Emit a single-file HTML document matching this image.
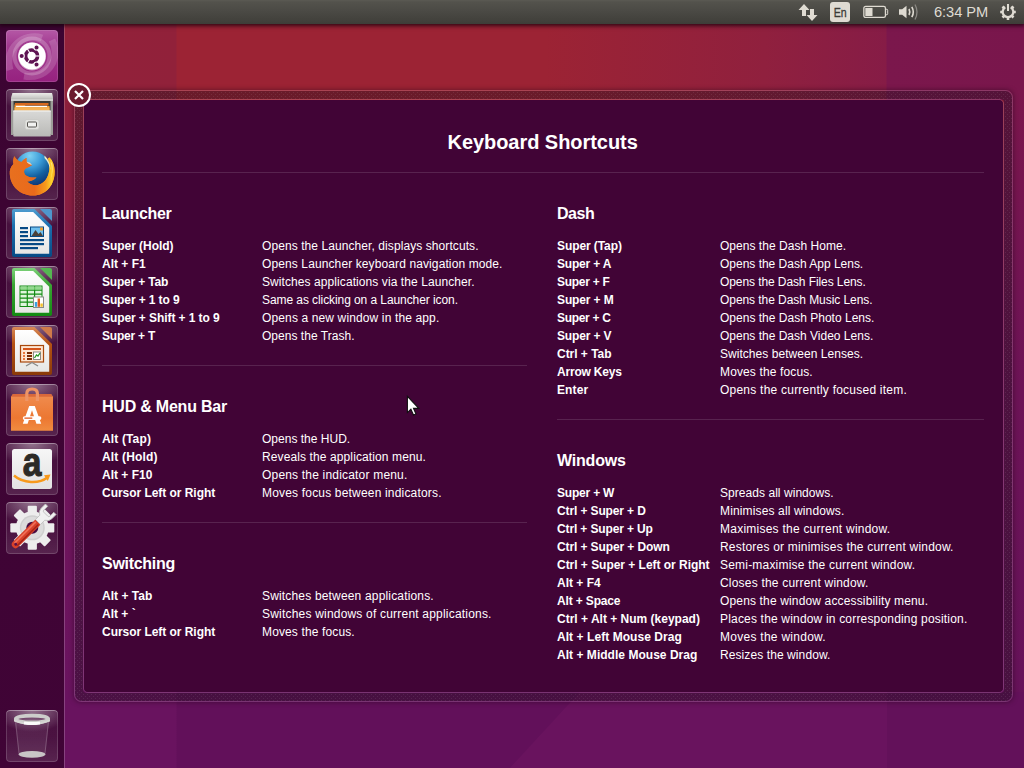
<!DOCTYPE html>
<html lang="en">
<head>
<meta charset="utf-8">
<title>Keyboard Shortcuts</title>
<style>
html,body{margin:0;padding:0}
body{width:1024px;height:768px;overflow:hidden;position:relative;background:#6a1460;font-family:"Liberation Sans",sans-serif;color:#fff}
#wall{position:absolute;left:0;top:0;width:1024px;height:768px;overflow:hidden;
 background:linear-gradient(to bottom,#8c1f3a 0,#8c1f3a 90px,#891e41 200px,#7b1850 300px,#70155a 450px,#69135f 700px,#69135f 768px)}
#wall div{position:absolute}
#panel{position:absolute;left:0;top:0;width:1024px;height:24px;background:linear-gradient(to bottom,#5b5a53 0,#53524c 2px,#4b4a45 45%,#42413c 85%,#3e3d38 100%);box-shadow:0 1px 4px 1px rgba(25,0,12,.8)}
#panel svg{position:absolute}
#clock{position:absolute;left:934px;top:3px;font-size:14.67px;line-height:18px;color:#dfdbd2;letter-spacing:-0.05px;white-space:pre}
#en{position:absolute;left:830px;top:2px;width:20px;height:20px;border-radius:3px;background:#dfdbd2;color:#3c3b37;font-size:12.3px;line-height:20px;text-align:center}
#en span{display:inline-block;transform:translate(.6px,1.2px) scaleX(.86);-webkit-text-stroke:.3px #3c3b37}
#launcher{position:absolute;left:0;top:24px;width:64px;height:744px;background:linear-gradient(to bottom,#3c0432 0,#400436 100%);border-right:1px solid rgba(255,255,255,.2);box-sizing:content-box;background-clip:padding-box}
.tile{position:absolute;left:6px;width:52px;height:52px;border-radius:4px;
 background:radial-gradient(ellipse 72% 42% at 50% 0,rgba(255,255,255,.42),rgba(255,255,255,0) 100%),linear-gradient(to bottom,rgba(255,255,255,.05) 0,rgba(255,255,255,.06) 50%,rgba(255,255,255,.13) 100%);
 box-shadow:inset 0 0 0 1px rgba(255,255,255,.16),inset 0 1px 0 0 rgba(255,255,255,.25)}
.tile svg{position:absolute;left:0;top:0}
#ov-outer{position:absolute;left:74px;top:90px;width:939px;height:612px;border-radius:7px;box-shadow:0 0 5px rgba(30,0,20,.5)}
#ov-svg{position:absolute;left:74px;top:90px}
#close{position:absolute;left:67px;top:83px}
.sep{position:absolute;height:1px;background:#58234f}
#txt div{position:absolute;white-space:pre}
.t{font-weight:bold;font-size:20px;line-height:28px}
.h{font-weight:bold;font-size:16px;line-height:22px}
.k{font-weight:bold;font-size:12px;line-height:18px}
.d{font-size:12px;line-height:18px}

</style>
</head>
<body>
<div id="wall">
<div style="left:65px;top:24px;width:959px;height:76px;background:linear-gradient(to right,#93213a 0,#91213a 111px,#9c2334 112px,#9c2334 480px,#90203e 700px,#861c46 821px,#7b174c 822px,#79164c 959px)"></div>
<div style="left:1004px;top:90px;width:20px;height:678px;background:linear-gradient(to bottom,#7a164c 0,#6c1356 300px,#64125a 678px)"></div>
<div style="left:65px;top:692px;width:959px;height:76px;background:linear-gradient(to right,#69135f 0,#69135f 111px,#62105a 112px,#62105a 821px,#63115a 822px,#63115a 959px)"></div>
<div style="left:510px;top:692px;width:377px;height:76px;background:linear-gradient(135deg,#69135e 0,#69135e 100%);clip-path:polygon(70px 0,100% 0,100% 100%,0 100%)"></div>

</div>
<div id="launcher">
<!-- Dash -->
<div class="tile" style="top:6px;background:linear-gradient(to bottom,#b558a6 0,#a23a90 30%,#96217f 100%);box-shadow:inset 0 0 0 1px rgba(255,255,255,.14)">
<svg width="52" height="52" viewBox="0 0 52 52">
<defs><clipPath id="cpd"><rect width="52" height="52" rx="4"/></clipPath></defs>
<g clip-path="url(#cpd)" fill="none" stroke="#fff" stroke-opacity=".16">
<path d="M4 40C-2 18 18 2 36 8" stroke-width="7"/>
<path d="M46 10C56 30 40 50 18 46" stroke-width="7"/>
<circle cx="26" cy="26" r="17.500" stroke-width="4" stroke-opacity=".22"/>
</g>
<circle cx="26" cy="26.500" r="14" fill="#e9d3e5" fill-opacity=".6"/>
<circle cx="26" cy="26" r="13.600" fill="#fff"/>
<g transform="translate(25.600 26)">
<circle r="6" fill="none" stroke="#5e1252" stroke-width="3.600"/>
<g stroke="#fff" stroke-width="1.100"><path d="M3.500 0H9"/><path d="M-1.750 3.030L-4.500 7.790"/><path d="M-1.750 -3.030L-4.500 -7.790"/></g>
<g fill="#5e1252" stroke="#fff" stroke-width="1.100"><circle cx="-9.900" cy="0" r="2.600"/><circle cx="4.950" cy="-8.570" r="2.600"/><circle cx="4.950" cy="8.570" r="2.600"/></g>
</g>
</svg></div>
<!-- Files -->
<div class="tile" style="top:65px"><svg width="52" height="52" viewBox="0 0 52 52">
<defs><linearGradient id="gf1" x1="0" y1="0" x2="0" y2="1"><stop offset="0" stop-color="#d9d9d7"/><stop offset="1" stop-color="#b9b9b6"/></linearGradient>
<linearGradient id="gf2" x1="0" y1="0" x2="0" y2="1"><stop offset="0" stop-color="#ecece9"/><stop offset="1" stop-color="#c4c4c1"/></linearGradient></defs>
<path d="M6.500 4h39.500l1 5v37h-2v-1h-38v1h-2V9z" fill="#9d9d99"/>
<path d="M6.500 4h39.500l1 5.500h-42z" fill="url(#gf2)"/>
<rect x="5" y="9.500" width="42" height="2.500" fill="#d0d0cd"/>
<rect x="7.500" y="12" width="37" height="10" fill="#3a3a36"/>
<path d="M8.500 15.500h10l1 1.500h24v5h-35z" fill="#f0a23c"/>
<path d="M9 14h33.500v2.500H9z" fill="#d96a1e"/>
<rect x="10" y="16.800" width="31" height="1.300" fill="#fff"/>
<rect x="8.500" y="18.500" width="35" height="3.500" fill="#f6b256"/>
<rect x="7.200" y="21.500" width="37.600" height="26" rx="1" fill="url(#gf1)"/>
<rect x="7.200" y="21.500" width="37.600" height="1.200" fill="#eeeeec"/>
<rect x="19" y="30.500" width="14" height="10" rx="2" fill="#e3e3e0" stroke="#c8c8c4" stroke-width=".8"/>
<rect x="21.500" y="33" width="9" height="5" rx="1" fill="#f2f2f0" stroke="#55534e" stroke-width="1"/>
</svg></div>
<!-- Firefox -->
<div class="tile" style="top:124px"><svg width="52" height="52" viewBox="0 0 52 52">
<defs><radialGradient id="gff1" cx=".42" cy=".12" r=".95"><stop offset="0" stop-color="#7fd2f2"/><stop offset=".35" stop-color="#3a9bd8"/><stop offset=".62" stop-color="#14609f"/><stop offset="1" stop-color="#0b2566"/></radialGradient>
<linearGradient id="gff2" x1="0" y1="0" x2="1" y2="0"><stop offset="0" stop-color="#e8701f"/><stop offset=".55" stop-color="#e96a1b"/><stop offset=".8" stop-color="#f59a1c"/><stop offset=".93" stop-color="#fdd02c"/><stop offset="1" stop-color="#f7a81e"/></linearGradient>
<linearGradient id="gff3" x1="0" y1="0" x2="0" y2="1"><stop offset="0" stop-color="#d4500f" stop-opacity="0"/><stop offset=".6" stop-color="#d4500f" stop-opacity="0"/><stop offset="1" stop-color="#c8400c" stop-opacity=".55"/></linearGradient></defs>
<circle cx="26.500" cy="21.500" r="18" fill="url(#gff1)"/>
<path id="fox" d="M8.200 8.200C7 12 7 14 7.500 16C4.500 19 3.500 22 3.800 26C4 34 9 42 17 45.500C23 48 30 48.500 36 45.500C44 42 49 33 48.700 23C48.500 17 46.500 12.500 43.500 9.500C43 9.800 42.300 10 41.800 10.400C44 15 44 21 42.500 26C41 31 38 35 32 37C28 38 24 36.500 21 33.500C24 33.500 28 32 30.500 29.500C27 29.800 23 29.500 20 27.500C17.500 25.500 17.500 22 19.500 20.500C21.500 19.500 24 18.500 26 17C23.500 16.500 21.500 15.500 20.500 13.500C20.300 12.500 20.300 11 20.600 10C18.500 11 16.500 12.500 15.500 14C13 13.800 10.500 11.500 8.200 8.200Z" fill="url(#gff2)"/>
<use href="#fox" fill="url(#gff3)"/>
<path d="M38.500 7.500C42.500 11 44.500 16 44.300 22C43.500 17.500 42 13.500 38.500 10z" fill="#fff6cf" fill-opacity=".9"/>
<path d="M44.500 14C46.500 19 46.500 25 44.500 31C46.500 27 47.500 20 46 15z" fill="#fff0a0" fill-opacity=".7"/>
<path d="M20.500 13.500C21.500 15.500 23.500 16.500 26 17L24 14.800z" fill="#f7d2b0"/>
</svg></div>
<!-- Writer -->
<div class="tile" style="top:183px"><svg width="52" height="52" viewBox="0 0 52 52">
<defs><linearGradient id="gw" x1="0" y1="0" x2="0" y2="1"><stop offset="0" stop-color="#4f9ed0"/><stop offset=".35" stop-color="#1c6fae"/><stop offset="1" stop-color="#064a85"/></linearGradient>
<linearGradient id="gp" x1="0" y1="0" x2="0" y2="1"><stop offset="0" stop-color="#ffffff"/><stop offset="1" stop-color="#e6e6e4"/></linearGradient></defs>
<path d="M8 2h20.500L46 19V48q0 2-2 2H8q-2 0-2-2V4q0-2 2-2z" fill="url(#gw)"/>
<path d="M34 2h10q2 0 2 2v10z" fill="#4f97cc"/>
<path d="M9 5h18.200L43.200 20.700V46.800H9z" fill="url(#gp)"/>
<g fill="#064a85"><rect x="14" y="20" width="8" height="2.200"/><rect x="14" y="24" width="8" height="2.200"/><rect x="14" y="28" width="8" height="2.200"/><rect x="14" y="32" width="24" height="2.200"/><rect x="14" y="36" width="24" height="2.200"/><rect x="14" y="40" width="18" height="2.200"/></g>
<rect x="24.500" y="20" width="13" height="9.500" fill="#6fc0ee" stroke="#064a85" stroke-width="1"/>
<path d="M25.500 29l4-6 3 4 2-2 2.500 4z" fill="#4a4038"/><rect x="34" y="20.500" width="3" height="3" fill="#f0a030"/>
</svg></div>
<!-- Calc -->
<div class="tile" style="top:242px"><svg width="52" height="52" viewBox="0 0 52 52">
<defs><linearGradient id="gc" x1="0" y1="0" x2="0" y2="1"><stop offset="0" stop-color="#7ed27a"/><stop offset=".35" stop-color="#3aa534"/><stop offset="1" stop-color="#128a12"/></linearGradient></defs>
<path d="M8 2h20.500L46 19V48q0 2-2 2H8q-2 0-2-2V4q0-2 2-2z" fill="url(#gc)"/>
<path d="M34 2h10q2 0 2 2v10z" fill="#55b652"/>
<path d="M9 5h18.200L43.200 20.700V46.800H9z" fill="url(#gp)"/>
<rect x="14" y="20" width="22" height="20.500" fill="#dff5dc" stroke="#128a12" stroke-width="1"/>
<g stroke="#128a12" stroke-width="1.200"><path d="M14 24.200h22M14 28.200h22M14 32.200h22M14 36.200h22M21.300 20v20.500M28.600 20v20.500"/></g>
<rect x="14.500" y="20.500" width="21" height="3.300" fill="#7fd27b" fill-opacity=".8"/>
<rect x="27.500" y="31" width="10" height="10.500" fill="#fff" stroke="#8a8a88" stroke-width="1"/>
<rect x="28.800" y="36" width="2.400" height="4.800" fill="#3aa0e0"/><rect x="31.600" y="32.500" width="2.400" height="8.300" fill="#e2571c"/><rect x="34.400" y="37.500" width="2.400" height="3.300" fill="#f5c02a"/>
</svg></div>
<!-- Impress -->
<div class="tile" style="top:301px"><svg width="52" height="52" viewBox="0 0 52 52">
<defs><linearGradient id="gi" x1="0" y1="0" x2="0" y2="1"><stop offset="0" stop-color="#d98a58"/><stop offset=".35" stop-color="#b55214"/><stop offset="1" stop-color="#8a3a08"/></linearGradient></defs>
<path d="M8 2h20.500L46 19V48q0 2-2 2H8q-2 0-2-2V4q0-2 2-2z" fill="url(#gi)"/>
<path d="M34 2h10q2 0 2 2v10z" fill="#cf7a4a"/>
<path d="M9 5h18.200L43.200 20.700V46.800H9z" fill="url(#gp)"/>
<rect x="14.500" y="20.500" width="23" height="16.500" fill="#fde6d2" stroke="#a8480c" stroke-width="1.200"/>
<rect x="17" y="23" width="18" height="2" fill="#d4541a"/>
<g fill="#e8763a"><rect x="17" y="27" width="2" height="2"/><rect x="17" y="30" width="2" height="2"/><rect x="17" y="33" width="2" height="2"/></g>
<g fill="#7a2c04"><rect x="21" y="27" width="5" height="2"/><rect x="21" y="30" width="5" height="2"/><rect x="21" y="33" width="5" height="2"/></g>
<rect x="27.500" y="27" width="7" height="7.500" fill="#fff" stroke="#8a8a88" stroke-width="1"/><path d="M28.500 33l2-3 1.500 1 2-3" stroke="#2a9a2a" stroke-width="1.300" fill="none"/>
<path d="M26 37.500l-6 3.500M26 37.500l6 3.500" stroke="#8a8a88" stroke-width="1.400"/>
</svg></div>
<!-- Software Center -->
<div class="tile" style="top:360px"><svg width="52" height="52" viewBox="0 0 52 52">
<defs><linearGradient id="gs" x1="0" y1="0" x2="0" y2="1"><stop offset="0" stop-color="#f08d50"/><stop offset=".65" stop-color="#ec7732"/><stop offset="1" stop-color="#f08c40"/></linearGradient></defs>
<path d="M7 10h38l2 2.700v34.100H5V12.700z" fill="url(#gs)"/>
<path d="M7 10h38l2 2.700H5z" fill="#d9683a"/>
<path d="M20.800 17V9.500q0-4.500 5.300-4.500t5.300 4.500V17" fill="none" stroke="#ee9466" stroke-width="3.200"/>
<path d="M23.200 22h5.600L35.200 39.700h-4.800L26 26.300 21.600 39.700h-4.800z" fill="#fff"/>
<rect x="16.800" y="32.200" width="18.600" height="3.700" rx="1.850" fill="#fff"/>
<rect x="18.200" y="33.400" width="8.300" height="1.400" rx=".7" fill="#e2571c"/>
</svg></div>
<!-- Amazon -->
<div class="tile" style="top:419px"><svg width="52" height="52" viewBox="0 0 52 52">
<defs><linearGradient id="ga" x1="0" y1="0" x2="0" y2="1"><stop offset="0" stop-color="#f6f6f6"/><stop offset="1" stop-color="#e2e2e2"/></linearGradient></defs>
<rect x="6" y="6" width="40" height="40" rx="2.500" fill="url(#ga)"/>
<text transform="translate(26 33.300) scale(.84 1)" text-anchor="middle" font-family="Liberation Sans, sans-serif" font-weight="bold" font-size="40" fill="#2c2a26" stroke="#2c2a26" stroke-width="1.100">a</text>
<path d="M8 32.500C17 40.500 33 41 41.500 34.500" fill="none" stroke="#f79a1c" stroke-width="2.400"/>
<path d="M38 32.200l6.500-.7-2.700 6.500z" fill="#f79a1c"/>
</svg></div>
<!-- Settings -->
<div class="tile" style="top:478px"><svg width="52" height="52" viewBox="0 0 52 52">
<g transform="translate(26.300 25.800)">
<g fill="#ededed"><circle r="16.500"/>
<g id="tooth"><rect x="-4.600" y="-22" width="9.200" height="8" rx="1"/></g>
<use href="#tooth" transform="rotate(45)"/><use href="#tooth" transform="rotate(90)"/><use href="#tooth" transform="rotate(135)"/><use href="#tooth" transform="rotate(180)"/><use href="#tooth" transform="rotate(225)"/><use href="#tooth" transform="rotate(270)"/><use href="#tooth" transform="rotate(315)"/></g>
<circle r="12.500" fill="#cfcfcf"/><circle r="11" fill="#dcdcdc"/>
<circle r="6" fill="#4a0d40"/>
</g>
<g transform="rotate(45 26 26) translate(0 2)">
<rect x="22.300" y="14" width="7.400" height="37" rx="3.700" fill="#d8402a"/>
<rect x="23.600" y="17" width="1.600" height="30" fill="#f0705a"/>
<rect x="27.300" y="17" width="1.400" height="30" fill="#a82414"/>
<circle cx="26" cy="47" r="1.500" fill="#5a1048"/>
<path d="M18.500 -2.500v6q0 4 4 6v6h7v-6q4-2 4-6v-6h-3.200v5.500q0 1.500-1.500 1.500h-5.600q-1.500 0-1.500-1.500v-5.500z" fill="#f1f1f1" stroke="#bdbdbd" stroke-width=".8"/>
</g>
</svg></div>
<!-- Trash -->
<div class="tile" style="top:686px"><svg width="52" height="52" viewBox="0 0 52 52">
<path d="M8.500 9L12.500 44q13.500 5 27 0L43.500 9z" fill="#fff" fill-opacity=".07"/>
<path d="M9.500 11L13 43" stroke="#fff" stroke-opacity=".2" stroke-width="1" fill="none"/><path d="M42.500 11L39 43" stroke="#fff" stroke-opacity=".2" stroke-width="1" fill="none"/>
<ellipse cx="26" cy="44.300" rx="13.500" ry="3.400" fill="#d2d2d0" fill-opacity=".92"/>
<ellipse cx="26" cy="9" rx="16.300" ry="3.400" fill="none" stroke="#cdcdcb" stroke-width="3.600"/>
<path d="M8 9.500v2q18 7 36 0v-2q-18 7-36 0z" fill="#d6d6d4"/>
<path d="M18 13q8 1.200 16 0" stroke="#fff" stroke-width="3" fill="none" stroke-opacity=".9"/>
</svg></div>
</div>

<div id="ov-outer"></div>
<svg id="ov-svg" width="939" height="612" viewBox="0 0 939 612">
<defs><pattern id="dots" width="4" height="4" patternUnits="userSpaceOnUse" x="0" y="0"><rect width="4" height="4" fill="#1e0f1b" fill-opacity=".4"/><rect x="1" y="0" width="1" height="1" fill="#fff" fill-opacity=".08"/><rect x="3" y="2" width="1" height="1" fill="#fff" fill-opacity=".08"/></pattern></defs>
<path fill-rule="evenodd" fill="url(#dots)" d="M7.500 1h924a6.500 6.500 0 0 1 6.500 6.500v597a6.500 6.500 0 0 1-6.500 6.500h-924a6.500 6.500 0 0 1-6.500-6.500v-597a6.500 6.500 0 0 1 6.500-6.500zM13 9a4 4 0 0 0-4 4v586a4 4 0 0 0 4 4h913a4 4 0 0 0 4-4v-586a4 4 0 0 0-4-4z"/>
<rect x=".5" y=".5" width="938" height="611" rx="7" fill="none" stroke="#fff" stroke-opacity=".15"/>
<rect x="9.500" y="9.500" width="920" height="593" rx="4.500" fill="none" stroke="#fff" stroke-opacity=".15"/>
<rect x="10" y="10" width="919" height="592" rx="4" fill="#410436"/>
</svg>
<svg id="close" width="24" height="24" viewBox="0 0 24 24"><circle cx="12" cy="12" r="11" fill="#6b1a2e" stroke="#fff" stroke-width="2"/><path d="M8 8l8 8M16 8l-8 8" stroke="#fff" stroke-width="2.2" fill="none"/></svg>
<div class="sep" style="left:102px;top:172px;width:882px"></div>
<div class="sep" style="left:102px;top:365px;width:425px"></div>
<div class="sep" style="left:102px;top:522px;width:425px"></div>
<div class="sep" style="left:557px;top:419px;width:427px"></div>

<div id="txt">
<div class="t" style="left:447.5px;top:127.57px;letter-spacing:-0.05px">Keyboard Shortcuts</div>
<div class="h" style="left:102px;top:203.26px;letter-spacing:-0.33px">Launcher</div>
<div class="k" style="left:102px;top:236.84px;letter-spacing:-0.04px">Super (Hold)</div>
<div class="d" style="left:262px;top:236.84px;letter-spacing:0.08px">Opens the Launcher, displays shortcuts.</div>
<div class="k" style="left:102px;top:254.84px;letter-spacing:-0.0px">Alt + F1</div>
<div class="d" style="left:262px;top:254.84px;letter-spacing:0.11px">Opens Launcher keyboard navigation mode.</div>
<div class="k" style="left:102px;top:272.84px;letter-spacing:-0.19px">Super + Tab</div>
<div class="d" style="left:262px;top:272.84px;letter-spacing:0.08px">Switches applications via the Launcher.</div>
<div class="k" style="left:102px;top:290.84px;letter-spacing:-0.11px">Super + 1 to 9</div>
<div class="d" style="left:262px;top:290.84px;letter-spacing:-0.08px">Same as clicking on a Launcher icon.</div>
<div class="k" style="left:102px;top:308.84px;letter-spacing:-0.08px">Super + Shift + 1 to 9</div>
<div class="d" style="left:262px;top:308.84px;letter-spacing:0.13px">Opens a new window in the app.</div>
<div class="k" style="left:102px;top:326.84px;letter-spacing:-0.22px">Super + T</div>
<div class="d" style="left:262px;top:326.84px;letter-spacing:0.03px">Opens the Trash.</div>
<div class="h" style="left:102px;top:396.26px;letter-spacing:-0.22px">HUD &amp; Menu Bar</div>
<div class="k" style="left:102px;top:429.84px;letter-spacing:0.14px">Alt (Tap)</div>
<div class="d" style="left:262px;top:429.84px;letter-spacing:0.01px">Opens the HUD.</div>
<div class="k" style="left:102px;top:447.84px;letter-spacing:0.17px">Alt (Hold)</div>
<div class="d" style="left:262px;top:447.84px;letter-spacing:0.11px">Reveals the application menu.</div>
<div class="k" style="left:102px;top:465.84px;letter-spacing:0.01px">Alt + F10</div>
<div class="d" style="left:262px;top:465.84px;letter-spacing:0.19px">Opens the indicator menu.</div>
<div class="k" style="left:102px;top:483.84px;letter-spacing:-0.04px">Cursor Left or Right</div>
<div class="d" style="left:262px;top:483.84px;letter-spacing:0.18px">Moves focus between indicators.</div>
<div class="h" style="left:102px;top:553.26px;letter-spacing:-0.29px">Switching</div>
<div class="k" style="left:102px;top:586.84px;letter-spacing:0.02px">Alt + Tab</div>
<div class="d" style="left:262px;top:586.84px;letter-spacing:0.17px">Switches between applications.</div>
<div class="k" style="left:102px;top:604.84px;letter-spacing:0.01px">Alt + `</div>
<div class="d" style="left:262px;top:604.84px;letter-spacing:0.2px">Switches windows of current applications.</div>
<div class="k" style="left:102px;top:622.84px;letter-spacing:-0.04px">Cursor Left or Right</div>
<div class="d" style="left:262px;top:622.84px;letter-spacing:0.13px">Moves the focus.</div>
<div class="h" style="left:557px;top:203.26px;letter-spacing:-0.46px">Dash</div>
<div class="k" style="left:557px;top:236.84px;letter-spacing:-0.09px">Super (Tap)</div>
<div class="d" style="left:720px;top:236.84px;letter-spacing:0.03px">Opens the Dash Home.</div>
<div class="k" style="left:557px;top:254.84px;letter-spacing:-0.18px">Super + A</div>
<div class="d" style="left:720px;top:254.84px;letter-spacing:-0.01px">Opens the Dash App Lens.</div>
<div class="k" style="left:557px;top:272.84px;letter-spacing:-0.27px">Super + F</div>
<div class="d" style="left:720px;top:272.84px;letter-spacing:-0.09px">Opens the Dash Files Lens.</div>
<div class="k" style="left:557px;top:290.84px;letter-spacing:-0.12px">Super + M</div>
<div class="d" style="left:720px;top:290.84px;letter-spacing:-0.06px">Opens the Dash Music Lens.</div>
<div class="k" style="left:557px;top:308.84px;letter-spacing:-0.31px">Super + C</div>
<div class="d" style="left:720px;top:308.84px;letter-spacing:0.01px">Opens the Dash Photo Lens.</div>
<div class="k" style="left:557px;top:326.84px;letter-spacing:-0.16px">Super + V</div>
<div class="d" style="left:720px;top:326.84px;letter-spacing:0.0px">Opens the Dash Video Lens.</div>
<div class="k" style="left:557px;top:344.84px;letter-spacing:-0.03px">Ctrl + Tab</div>
<div class="d" style="left:720px;top:344.84px;letter-spacing:0.04px">Switches between Lenses.</div>
<div class="k" style="left:557px;top:362.84px;letter-spacing:-0.2px">Arrow Keys</div>
<div class="d" style="left:720px;top:362.84px;letter-spacing:0.13px">Moves the focus.</div>
<div class="k" style="left:557px;top:380.84px;letter-spacing:0.12px">Enter</div>
<div class="d" style="left:720px;top:380.84px;letter-spacing:0.23px">Opens the currently focused item.</div>
<div class="h" style="left:557px;top:450.26px;letter-spacing:-0.2px">Windows</div>
<div class="k" style="left:557px;top:483.84px;letter-spacing:-0.2px">Super + W</div>
<div class="d" style="left:720px;top:483.84px;letter-spacing:0.05px">Spreads all windows.</div>
<div class="k" style="left:557px;top:501.84px;letter-spacing:-0.12px">Ctrl + Super + D</div>
<div class="d" style="left:720px;top:501.84px;letter-spacing:0.14px">Minimises all windows.</div>
<div class="k" style="left:557px;top:519.84px;letter-spacing:-0.13px">Ctrl + Super + Up</div>
<div class="d" style="left:720px;top:519.84px;letter-spacing:0.24px">Maximises the current window.</div>
<div class="k" style="left:557px;top:537.84px;letter-spacing:-0.11px">Ctrl + Super + Down</div>
<div class="d" style="left:720px;top:537.84px;letter-spacing:0.2px">Restores or minimises the current window.</div>
<div class="k" style="left:557px;top:555.84px;letter-spacing:-0.03px">Ctrl + Super + Left or Right</div>
<div class="d" style="left:720px;top:555.84px;letter-spacing:0.2px">Semi-maximise the current window.</div>
<div class="k" style="left:557px;top:573.84px;letter-spacing:-0.0px">Alt + F4</div>
<div class="d" style="left:720px;top:573.84px;letter-spacing:0.2px">Closes the current window.</div>
<div class="k" style="left:557px;top:591.84px;letter-spacing:-0.15px">Alt + Space</div>
<div class="d" style="left:720px;top:591.84px;letter-spacing:0.15px">Opens the window accessibility menu.</div>
<div class="k" style="left:557px;top:609.84px;letter-spacing:0.0px">Ctrl + Alt + Num (keypad)</div>
<div class="d" style="left:720px;top:609.84px;letter-spacing:0.18px">Places the window in corresponding position.</div>
<div class="k" style="left:557px;top:627.84px;letter-spacing:0.06px">Alt + Left Mouse Drag</div>
<div class="d" style="left:720px;top:627.84px;letter-spacing:0.27px">Moves the window.</div>
<div class="k" style="left:557px;top:645.84px;letter-spacing:0.03px">Alt + Middle Mouse Drag</div>
<div class="d" style="left:720px;top:645.84px;letter-spacing:0.09px">Resizes the window.</div>
</div>
<div id="panel">
<svg style="left:797px;top:2px" width="22" height="20" viewBox="0 0 22 20"><path d="M7 2l5.5 6H9v6H5V8H1.5z" fill="#dfdbd2"/><path d="M15 19l-5.5-6H13V7h4v6h3.500z" fill="#dfdbd2"/></svg>
<div id="en"><span>En</span></div>
<svg style="left:862px;top:4px" width="27" height="16" viewBox="0 0 27 16"><rect x="1.850" y="2.450" width="21.600" height="11" rx="1.800" fill="none" stroke="#dfdbd2" stroke-width="1.300"/><path d="M24 5.300h.8q.9 0 .9.900v3.600q0 .9-.9.900H24" fill="none" stroke="#dfdbd2" stroke-width="1"/><rect x="3.300" y="3.900" width="7.200" height="8.100" fill="#dfdbd2"/></svg>
<svg style="left:898px;top:3px" width="22" height="18" viewBox="0 0 22 18"><path d="M1 6.200h3.200L8.500 2.800v12.400l-4.300-3.400H1z" fill="#dfdbd2"/><path d="M11 6q1.600 3 0 6" fill="none" stroke="#dfdbd2" stroke-width="1.600"/><path d="M13.800 3.800q3 5.200 0 10.400" fill="none" stroke="#dfdbd2" stroke-width="1.600"/><path d="M17 1.500q4 7.500 0 15" fill="none" stroke="#8a8883" stroke-width="1.300"/></svg>
<div id="clock">6:34 PM</div>
<svg style="left:999px;top:3px" width="18" height="18" viewBox="0 0 18 18"><g fill="none" stroke="#dfdbd2"><path d="M6.300 4.300A5.300 5.300 0 1 0 11.700 4.300" stroke-width="2.200"/><path d="M9 1v7" stroke-width="2"/><g stroke-width="2.600"><path d="M1.200 9h2.200M14.600 9h2.200M9 14.800v2.200M3.500 3.500l1.500 1.500M14.500 3.500l-1.500 1.500M3.500 14.500l1.500-1.500M14.500 14.500l-1.500-1.500"/></g></g></svg>
</div>

<svg id="cursor" width="15" height="22" viewBox="0 0 15 22" style="position:absolute;left:406px;top:394.500px"><path d="M1.400 1.300V17.600L4.900 14.300 7.500 20 10 18.900 7.500 13.400H12.800z" fill="#fff" stroke="#111" stroke-width="1.100" stroke-linejoin="miter"/></svg>
</body>
</html>
